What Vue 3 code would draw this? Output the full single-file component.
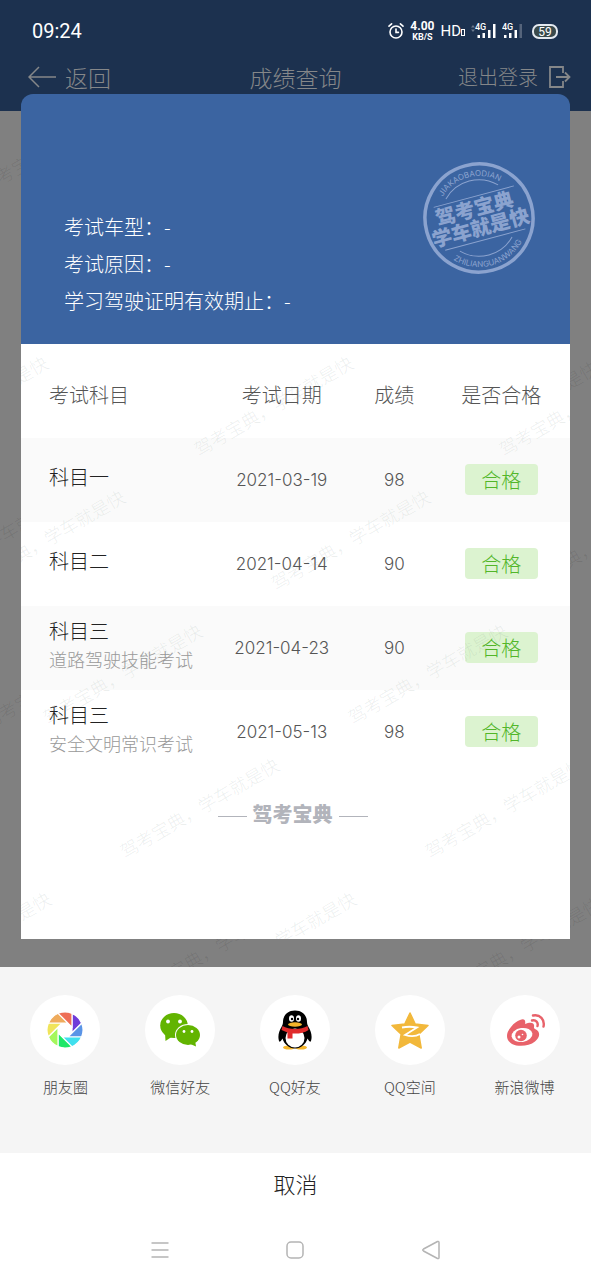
<template>
  <div class="app">
    <div class="stage">
      <div class="page">
        <header class="page-header">
          <div class="status-bar">
            <span class="clock">09:24</span>
            <div class="status-icons">
              <svg class="alarm" viewBox="0 0 16 18" fill="none" stroke="currentColor" stroke-width="1.6" stroke-linecap="round">
                <circle cx="8" cy="10" r="6" />
                <path d="M8 7v3.4h2.4M1 4.2 3.6 1.8M15 4.2l-2.6-2.4" />
              </svg>
              <span class="net"><b>4.00</b><small>KB/S</small></span>
              <span class="hd">HD<i></i></span>
              <svg class="signal signal-data" viewBox="0 0 25 18" fill="currentColor">
                <path d="M0 5.5 2 3l2 2.5zM0 7.5 2 10l2-2.5z" opacity="0.35" />
                <text x="4" y="8" class="signal-text">4G</text>
                <path d="M6.5 13H9v3H6.5zM11.5 11H14v5h-2.5zM17 8h2.5v8H17zM22 2h2.5v14H22z" />
              </svg>
              <svg class="signal" viewBox="0 0 20 18" fill="currentColor">
                <text x="0" y="8" class="signal-text">4G</text>
                <path d="M2 13h2.5v3H2zM7 11h2.5v5H7zM12.5 8H15v8h-2.5z" />
                <path d="M17.5 2H20v14h-2.5z" opacity="0.25" />
              </svg>
              <span class="battery">59</span>
            </div>
          </div>
          <nav class="nav">
            <a href="#" class="nav-link back">
              <svg viewBox="0 0 28 22" width="28" height="22" fill="none" stroke="currentColor" stroke-width="1.5">
                <path d="M28 11H1M11 1 1 11l10 10" />
              </svg>
              返回
            </a>
            <h1>成绩查询</h1>
            <a href="#" class="nav-link logout">
              退出登录
              <svg viewBox="0 0 24 24" width="24" height="24" fill="none" stroke="currentColor" stroke-width="1.8">
                <path d="M16 8V2H3v20h13v-6M9 12h13M18 7.5l4.5 4.5-4.5 4.5" />
              </svg>
            </a>
          </nav>
        </header>
        <div class="page-body">
          <svg class="watermark" aria-hidden="true">
            <text v-for="(m, i) in pageMarks" :key="i" :transform="`translate(${m.x} ${m.y}) rotate(-30)`">{{ slogan }}</text>
          </svg>
        </div>
      </div>

      <main class="card">
        <section class="card-top">
          <ul class="info">
            <li v-for="item in info" :key="item">{{ item }}：-</li>
          </ul>
          <svg class="stamp" viewBox="0 0 112 112">
            <defs>
              <path id="arc-top" d="M14 56a42 42 0 0 1 84 0" />
              <path id="arc-bottom" d="M7 56a49 49 0 0 0 98 0" />
            </defs>
            <g transform="rotate(-15 56 56)">
              <circle cx="56" cy="56" r="54" fill="none" stroke="currentColor" stroke-width="3.5" />
              <g fill="none" stroke="currentColor" stroke-width="1">
                <path d="M29 29a38 38 0 0 1 54 0M29 83a38 38 0 0 0 54 0" />
                <path d="M15 34h83M15 78.5h83" />
              </g>
              <g fill="currentColor" text-anchor="middle">
                <text class="stamp-main" x="54" y="53">驾考宝典</text>
                <text class="stamp-main" x="55" y="73">学车就是快</text>
                <text class="stamp-small"><textPath href="#arc-top" startOffset="50%">JIAKAOBAODIAN</textPath></text>
                <text class="stamp-small"><textPath href="#arc-bottom" startOffset="50%">ZHILIANGUANWANG</textPath></text>
              </g>
            </g>
          </svg>
        </section>

        <section class="card-body">
          <table class="scores">
            <thead>
              <tr>
                <th class="subject">考试科目</th>
                <th class="date">考试日期</th>
                <th class="score">成绩</th>
                <th class="result">是否合格</th>
              </tr>
            </thead>
            <tbody>
              <tr v-for="row in rows" :key="row.date">
                <td class="subject">
                  <div class="subject-name">{{ row.name }}</div>
                  <div v-if="row.sub" class="subject-sub">{{ row.sub }}</div>
                </td>
                <td class="number">{{ row.date }}</td>
                <td class="number">{{ row.score }}</td>
                <td><span class="tag">合格</span></td>
              </tr>
            </tbody>
          </table>
          <div class="brand">驾考宝典</div>
          <svg class="watermark" aria-hidden="true">
            <text v-for="(m, i) in cardMarks" :key="i" :transform="`translate(${m.x} ${m.y}) rotate(-30)`">{{ slogan }}</text>
          </svg>
        </section>
      </main>
    </div>

    <div class="share">
      <button type="button" class="share-item">
        <span class="share-icon">
          <svg viewBox="-20 -20 40 40">
            <path
              v-for="(color, i) in blades"
              :key="color"
              d="M7-16.6V2.9L16.7-6.8A18 18 0 0 0 7-16.6Z"
              :fill="color"
              :transform="`rotate(${i * 45})`"
              stroke="#fff"
              stroke-width="1.2"
            />
          </svg>
        </span>
        朋友圈
      </button>
      <button type="button" class="share-item">
        <span class="share-icon">
          <svg viewBox="-20 -20 40 40">
            <g fill="#62b400">
              <ellipse cx="-6" cy="-4.5" rx="13.8" ry="12.5" />
              <path d="M-15 3-14.5 11-7 6z" />
            </g>
            <ellipse cx="8" cy="5" rx="13" ry="11" fill="#fff" />
            <g fill="#62b400">
              <ellipse cx="8" cy="5" rx="12" ry="10" />
              <path d="M8 13 16 16.5 15 10z" />
            </g>
            <g fill="#fff">
              <circle cx="-12" cy="-8.5" r="1.9" />
              <circle cx="0" cy="-8.5" r="1.9" />
              <circle cx="4" cy="1.5" r="1.4" />
              <circle cx="12" cy="1.5" r="1.4" />
            </g>
          </svg>
        </span>
        微信好友
      </button>
      <button type="button" class="share-item">
        <span class="share-icon">
          <svg viewBox="-20 -20 40 40">
            <ellipse cx="-6" cy="17.5" rx="6" ry="2" fill="#f5b52a" />
            <ellipse cx="6" cy="17.5" rx="6" ry="2" fill="#f5b52a" />
            <path d="M0-19.5C-8-19.5-12-14-12-8c0 2-1 4-1.500 5C-16 1-17.5 6-16 11c1 2 2.5-1 3.5-2.5C-11 14-6 18.500 0 18.500s11-4.500 12.500-10C13.5 10 15 13 16 11c1.500-5 0-10-2.500-14C13-4 12-6 12-8c0-6-4-11.500-12-11.500z" fill="#000" />
            <ellipse cx="0" cy="8" rx="9.5" ry="9.5" fill="#fff" />
            <path d="M-12.5-4C-6 0 6 0 12.5-4L13.5 0C9 3 3 4-2.5 3.5V8.500H-7.500V2.5L-13.5 0z" fill="#e02b2b" />
            <ellipse cx="-3.5" cy="-11.5" rx="2.5" ry="3.2" fill="#fff" />
            <ellipse cx="3.5" cy="-11.5" rx="2.5" ry="3.2" fill="#fff" />
            <circle cx="-3" cy="-11" r="1.2" />
            <circle cx="3" cy="-11" r="1.2" />
            <ellipse cx="0" cy="-5.5" rx="7" ry="2.2" fill="#f5b52a" />
          </svg>
        </span>
        QQ好友
      </button>
      <button type="button" class="share-item">
        <span class="share-icon">
          <svg viewBox="-20 -20 40 40">
            <path d="M0-17 5.2-6 18-4.5 8.8 4.2 11.2 18 0 12-11.2 18-8.8 4.2-18-4.5-5.2-6z" fill="#f2b83b" stroke="#f2b83b" stroke-width="1.5" stroke-linejoin="round" />
            <path d="M-8-2.5C-3-3.5 2-3.5 7-2.5L-5 5C0 6.5 6 6.5 10 4" fill="none" stroke="#fff" stroke-width="1.8" />
          </svg>
        </span>
        QQ空间
      </button>
      <button type="button" class="share-item">
        <span class="share-icon">
          <svg viewBox="-20 -20 40 40">
            <path d="M-5-10C-1-12 1-10 0-6 5-8 10-8 9-3c0 1 0 1.500 1 2 6 2 5 9 0 12.500-6 5-17 5.500-23 2.500-7-4-6-11.500-1-17C-11-7-8-9-5-10z" fill="#e8626a" />
            <ellipse cx="-3" cy="5" rx="10.5" ry="7" fill="#fff" transform="rotate(-8 -3 5)" />
            <circle cx="-4" cy="5.5" r="5.8" fill="#e8626a" />
            <circle cx="-6" cy="7" r="1.5" fill="#fff" />
            <circle cx="-2.5" cy="4.5" r="0.8" fill="#fff" />
            <path d="M7-9.5c4-1 6.500 2 5.500 5.500M8-14.500c7-1.500 12 4 10.500 11" fill="none" stroke="#e8626a" stroke-width="2.4" stroke-linecap="round" />
          </svg>
        </span>
        新浪微博
      </button>
    </div>

    <button type="button" class="cancel">取消</button>

    <div class="system-nav">
      <button type="button" aria-label="菜单">
        <svg viewBox="0 0 20 20"><path d="M1.5 3h17M1.5 10h17M1.5 17h17" /></svg>
      </button>
      <button type="button" aria-label="主页">
        <svg viewBox="0 0 20 20"><rect x="2" y="2" width="16" height="16" rx="4" /></svg>
      </button>
      <button type="button" aria-label="后退">
        <svg viewBox="0 0 20 20"><path d="M16.5 1.5 2.5 9q-1.5 1 0 2l14 7.5q1.5.5 1.5-1V2.5q0-1.5-1.5-1z" /></svg>
      </button>
    </div>
  </div>
</template>

<script setup>
const slogan = '驾考宝典，学车就是快'

const info = ['考试车型', '考试原因', '学习驾驶证明有效期止']

const rows = [
  { name: '科目一', date: '2021-03-19', score: 98 },
  { name: '科目二', date: '2021-04-14', score: 90 },
  { name: '科目三', sub: '道路驾驶技能考试', date: '2021-04-23', score: 90 },
  { name: '科目三', sub: '安全文明常识考试', date: '2021-05-13', score: 98 }
]

const blades = ['#6f3bd9', '#5a94e6', '#3fe0ee', '#1ee768', '#a4f75c', '#f0e45a', '#efab5c', '#ee6f57']

// diagonal grid of slogans, every row is shifted to the right
const makeMarks = (x0, y0, count) => {
  const marks = []
  for (let r = 0; r < count; r++) {
    for (let c = -3; c < 3; c++) {
      const x = x0 + r * 77 + c * 305
      if (x > -156 && x < 580) marks.push({ x, y: y0 + r * 134 })
    }
  }
  return marks
}

const pageMarks = makeMarks(-15, 83, 7)
const cardMarks = makeMarks(178, 113, 5)
</script>

<style>
body {
  margin: 0;
}
</style>

<style scoped>
.app {
  min-height: 100vh;
  display: flex;
  flex-direction: column;
  background: #fff;
  font-family: "Noto Sans CJK SC", sans-serif;
  font-weight: 300;
}

button {
  border: 0;
  padding: 0;
  background: none;
  font: inherit;
  color: inherit;
}

.stage {
  display: grid;
}

.page,
.card {
  grid-area: 1 / 1;
}

.page {
  display: flex;
  flex-direction: column;
  background: #808080;
}

.page-header {
  padding-bottom: 19px;
  background: #1c314f;
}

.page-body {
  position: relative;
  flex: 1;
}

.status-bar {
  height: 62px;
  padding: 0 33px 0 32px;
  display: flex;
  align-items: center;
  justify-content: space-between;
  color: #fff;
  font-family: Roboto, sans-serif;
}

.clock {
  font-size: 20px;
  font-weight: 400;
}

.status-icons {
  display: flex;
  align-items: center;
  gap: 6px;
}

.alarm {
  width: 16px;
  height: 18px;
}

.net {
  display: flex;
  flex-direction: column;
  align-items: center;
  font-size: 12px;
  line-height: 12px;
}

.net b {
  font-weight: 700;
}

.net small {
  font-size: 9px;
  line-height: 10px;
  font-weight: 700;
}

.hd {
  display: flex;
  align-items: baseline;
  font-size: 15px;
  font-weight: 400;
}

.hd i {
  width: 2px;
  height: 5px;
  border: 1px solid #fff;
}

.signal {
  width: 20px;
  height: 18px;
}

.signal-data {
  width: 25px;
}

.signal-text {
  font-size: 9px;
  font-weight: 500;
}

.battery {
  width: 22px;
  height: 11px;
  margin-left: 4px;
  border: 2px solid #e4e9f0;
  border-radius: 7px;
  background: #3a4a4c;
  font-size: 12px;
  line-height: 12px;
  text-align: center;
  font-weight: 400;
}

.nav {
  height: 30px;
  padding: 0 20px;
  display: grid;
  grid-template-columns: 1fr auto 1fr;
  align-items: center;
  color: #858789;
}

.nav h1 {
  margin: 0;
  font-size: 23px;
  line-height: 28px;
  font-weight: 300;
}

.nav-link {
  display: flex;
  align-items: center;
  gap: 9px;
  color: inherit;
  line-height: 28px;
  text-decoration: none;
}

.back {
  padding-left: 8px;
  font-size: 23px;
}

.logout {
  justify-content: flex-end;
  font-size: 20px;
}

.watermark {
  position: absolute;
  inset: 0;
  width: 100%;
  height: 100%;
  overflow: hidden;
  pointer-events: none;
  font-size: 18px;
  fill: rgba(0, 0, 0, 0.1);
}

.card {
  position: relative;
  margin: 94px 21px 28px;
}

.card-top {
  padding: 68px 35px 25px 43px;
  display: flex;
  justify-content: space-between;
  border-radius: 12px 12px 0 0;
  background: #3b64a1;
}

.info {
  margin: 0;
  padding: 46px 0 0;
  list-style: none;
  color: #fff;
  font-size: 20px;
  line-height: 37px;
}

.stamp {
  width: 112px;
  height: 112px;
  color: #8ba3cf;
}

.stamp-main {
  font-size: 20px;
  font-weight: 900;
}

.stamp-small {
  font-family: Inter, sans-serif;
  font-size: 8px;
  font-weight: 400;
}

.card-body {
  position: relative;
  background: #fff;
}

.scores {
  width: 100%;
  table-layout: fixed;
  border-collapse: collapse;
  text-align: center;
}

.scores th {
  height: 94px;
  padding: 8px 0 0;
  box-sizing: border-box;
  font-size: 20px;
  line-height: 28px;
  font-weight: 300;
  color: #555;
  white-space: nowrap;
}

.scores td {
  height: 84px;
  padding: 0 0 2px;
  box-sizing: border-box;
}

.scores tbody tr:nth-child(odd) {
  background: #fafafa;
}

.scores .subject {
  width: 34%;
  padding-left: 28px;
  text-align: left;
}

.scores td.subject {
  padding-bottom: 6px;
}

.scores .date {
  width: 27%;
}

.scores .score {
  width: 14%;
}

.scores .result {
  width: 25%;
}

.subject-name {
  font-size: 20px;
  line-height: 28px;
  color: #222;
}

.subject-sub {
  font-size: 18px;
  line-height: 28px;
  color: #999;
  white-space: nowrap;
}

.scores .number {
  padding-bottom: 0;
  font-family: Inter, sans-serif;
  font-size: 17px;
  color: #555;
}

.tag {
  display: inline-block;
  width: 73px;
  border-radius: 4px;
  background: #dcf3d0;
  color: #52b62a;
  font-size: 20px;
  line-height: 31px;
}

.brand {
  height: 165px;
  padding: 26px 6px 0 0;
  box-sizing: border-box;
  display: flex;
  justify-content: center;
  gap: 6px;
  font-size: 20px;
  line-height: 28px;
  font-weight: 900;
  color: #b2b4bb;
}

.brand::before,
.brand::after {
  content: "";
  width: 29px;
  height: 1px;
  margin-top: 16px;
  background: #b2b4bb;
}

.card .watermark {
  fill: rgba(60, 90, 80, 0.1);
}

.share {
  padding: 28px 9px 54px 8px;
  display: grid;
  grid-template-columns: repeat(5, 1fr);
  background: #f5f5f5;
}

.share-item {
  display: flex;
  flex-direction: column;
  align-items: center;
  gap: 10px;
  font-size: 15px;
  line-height: 24px;
  color: #444;
}

.share-icon {
  width: 70px;
  height: 70px;
  display: flex;
  align-items: center;
  justify-content: center;
  border-radius: 50%;
  background: #fff;
}

.share-icon svg {
  width: 40px;
  height: 40px;
}

.cancel {
  font-size: 22px;
  line-height: 60px;
  color: #222;
}

.system-nav {
  padding: 0 92px 20px;
  flex: 1;
  display: grid;
  grid-template-columns: repeat(3, 1fr);
  align-items: end;
}

.system-nav svg {
  display: block;
  width: 20px;
  height: 20px;
  margin: 0 auto;
  fill: none;
  stroke: #b4b4b4;
  stroke-width: 1.5;
}
</style>
